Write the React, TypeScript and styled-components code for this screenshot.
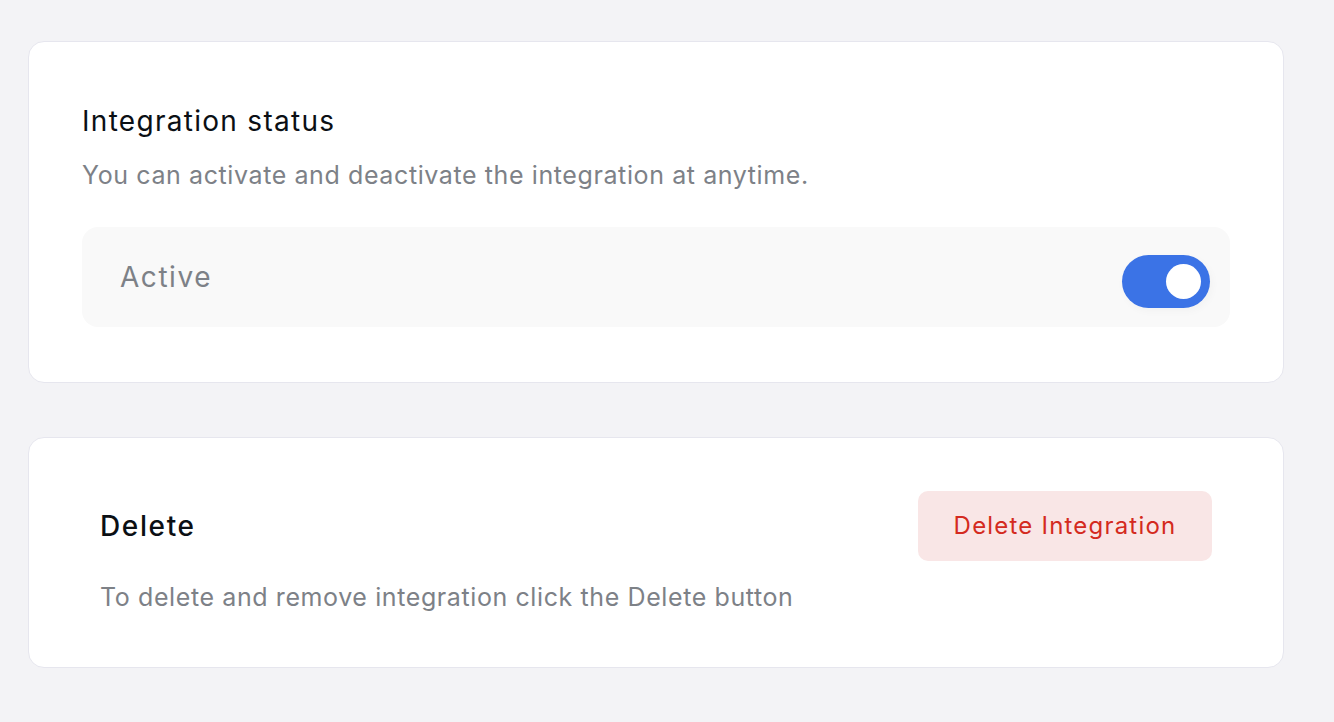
import React from "react";
import styled, { createGlobalStyle } from "styled-components";

const Global = createGlobalStyle`
  html, body { margin: 0; padding: 0; background: #f3f3f6; }
  body {
    font-family: Inter, "Noto Sans", sans-serif;
    -webkit-font-smoothing: antialiased;
  }
`;

const Page = styled.div`
  display: flex;
  flex-direction: column;
  gap: 54px;
  padding: 41px 50px 40px 28px;
`;

const Card = styled.section<{ $pad: string }>`
  background: #ffffff;
  border: 1.5px solid #e6e6ee;
  border-radius: 16px;
  padding: ${(p) => p.$pad};
  display: flex;
  flex-direction: column;
`;

const Title = styled.h2<{ $weight?: number; $spacing?: string }>`
  margin: 0;
  font-size: 28px;
  line-height: 34px;
  font-weight: ${(p) => p.$weight ?? 400};
  letter-spacing: ${(p) => p.$spacing ?? "0.046em"};
  color: #0b0f14;
`;

const Subtitle = styled.p<{ $top: number }>`
  margin: ${(p) => p.$top}px 0 0;
  font-size: 25px;
  line-height: 29px;
  letter-spacing: 0.6px;
  color: #7d8187;
`;

const StatusRow = styled.div`
  margin-top: 37px;
  height: 100px;
  background: #f9f9f9;
  border-radius: 16px;
  display: flex;
  align-items: center;
  justify-content: space-between;
  padding: 0 20px 0 38px;
`;

const StatusLabel = styled.span`
  font-size: 28px;
  line-height: 34px;
  letter-spacing: 0.055em;
  color: #7d8187;
`;

const Toggle = styled.button<{ $on: boolean }>`
  width: 88px;
  height: 53px;
  margin-top: 8px;
  border-radius: 27px;
  border: none;
  padding: 0 9px;
  background: ${(p) => (p.$on ? "#3b73e6" : "#d4d6db")};
  box-shadow: 2px 3px 8px rgba(0, 0, 0, 0.03);
  display: flex;
  align-items: center;
  justify-content: ${(p) => (p.$on ? "flex-end" : "flex-start")};
  cursor: pointer;
`;

const Thumb = styled.span`
  width: 35px;
  height: 35px;
  border-radius: 50%;
  background: #ffffff;
`;

const HeaderRow = styled.div`
  display: flex;
  align-items: center;
  justify-content: space-between;
`;

const DangerButton = styled.button`
  width: 294px;
  height: 70px;
  border: none;
  border-radius: 10px;
  background: #f9e6e6;
  color: #d42a20;
  font-family: inherit;
  font-size: 24px;
  line-height: 29px;
  letter-spacing: 0.05em;
  cursor: pointer;
`;

export default function App() {
  return (
    <>
      <Global />
      <Page>
        <Card $pad="62px 53px 55px 53px">
          <Title>Integration status</Title>
          <Subtitle $top={23}>
            You can activate and deactivate the integration at anytime.
          </Subtitle>
          <StatusRow>
            <StatusLabel>Active</StatusLabel>
            <Toggle $on aria-label="Active">
              <Thumb />
            </Toggle>
          </StatusRow>
        </Card>
        <Card $pad="52.5px 71px 55px 71px">
          <HeaderRow>
            <Title $weight={500} $spacing="0.058em">
              Delete
            </Title>
            <DangerButton>Delete Integration</DangerButton>
          </HeaderRow>
          <Subtitle $top={22}>
            To delete and remove integration click the Delete button
          </Subtitle>
        </Card>
      </Page>
    </>
  );
}
